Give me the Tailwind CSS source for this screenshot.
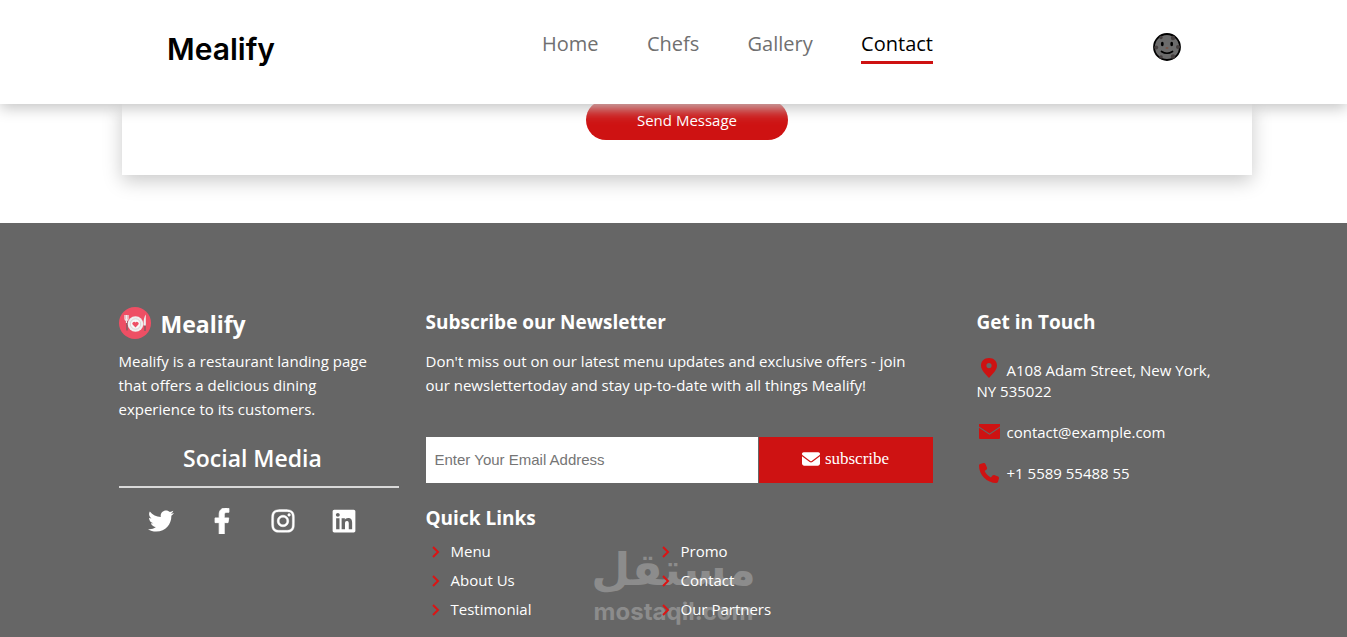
<!DOCTYPE html>
<html lang="en">
<head>
    <meta charset="UTF-8">
    <meta name="viewport" content="width=device-width, initial-scale=1.0">
    <title>Mealify - Contact</title>
    <script src="https://cdn.jsdelivr.net/npm/@tailwindcss/browser@4"></script>
</head>
<body class="bg-white font-['Open_Sans','Noto_Sans',sans-serif] text-[15px]">
    <!-- Icons used more than once -->
    <svg class="hidden" aria-hidden="true">
        <symbol id="chevron" viewBox="0 0 10 16"><path d="M2 3l5 5-5 5" fill="none" stroke="#dc1414" stroke-width="2"/></symbol>
    </svg>

    <!-- Header -->
    <header class="sticky top-0 z-20 bg-white shadow-[0_4px_14px_#c4c4c4]">
        <div class="grid grid-cols-[375fr_391fr_248fr] items-start pl-[167px] pr-[166px] h-[104px] pt-7">
            <a href="#" class="pt-px font-['Inter',sans-serif] font-semibold text-[30px] leading-10 text-black">Mealify</a>
            <nav class="flex justify-between whitespace-nowrap text-xl leading-8 text-[#707070]">
                <a href="#">Home</a>
                <a href="#">Chefs</a>
                <a href="#">Gallery</a>
                <a href="#" class="border-b-3 border-[#ce1212] pb-px text-black">Contact</a>
            </nav>
            <button type="button" aria-label="Dark mode" class="justify-self-end mt-[5px]">
                <svg class="size-7" viewBox="0 0 28 28">
                    <circle cx="14" cy="14" r="13" fill="#6b6b6b" stroke="#000" stroke-width="1.8"/>
                    <g fill="#453f3f">
                        <circle cx="8" cy="4.5" r="1.7"/><circle cx="20" cy="5" r="2.2"/><circle cx="3.2" cy="14.5" r="2"/>
                        <circle cx="25" cy="14" r="2"/><circle cx="8" cy="24" r="1.8"/><circle cx="20" cy="23.5" r="2.2"/>
                    </g>
                    <ellipse cx="9.3" cy="11" rx="1.4" ry="2.2"/><ellipse cx="18.7" cy="11" rx="1.4" ry="2.2"/>
                    <ellipse cx="14" cy="15" rx="1.5" ry="0.9" fill="#7a5547"/>
                    <path d="M8.500 18.500q5.500 3.500 11 0" fill="none" stroke="#000" stroke-width="1.7" stroke-linecap="round"/>
                </svg>
            </button>
        </div>
    </header>

    <!-- End of the contact form -->
    <main class="pl-[122px] pr-[95px] pb-12 -mt-1">
        <form class="flex justify-center bg-white pb-[35px] shadow-[0_6px_18px_rgba(0,0,0,0.21)]">
            <button type="button" class="h-10 w-[202px] rounded-full bg-[#ce1212] text-white">Send Message</button>
        </form>
    </main>

    <!-- Footer -->
    <footer class="relative bg-[#666] text-white pt-[83px] pb-[13px]">
        <div class="relative z-10 mx-auto max-w-[1140px] px-[15px] grid grid-cols-[307fr_551fr_252fr]">
            <div class="pr-[27px]">
                <div class="flex items-start gap-[10px]">
                    <svg class="size-8 mt-px" viewBox="0 0 32 32">
                        <circle cx="16" cy="16" r="16" fill="#ee4f64"/>
                        <path d="M8 14v9.500M26 17v7" stroke="#8d5a62" stroke-width="1.6"/>
                        <circle cx="16.500" cy="17" r="7.8" fill="#efefef"/>
                        <circle cx="16.500" cy="17" r="5.2" fill="#f7f7f7" stroke="#d2cccc" stroke-width="0.8"/>
                        <path d="M16.500 20.500l-2.900-2.900a1.700 1.700 0 0 1 2.900-2 1.700 1.700 0 0 1 2.900 2z" fill="#ee4f64"/>
                        <path d="M6 8v4q0 1.500 1.500 1.500t1.500-1.500V8M7.500 8v8" fill="none" stroke="#efefef" stroke-width="1.2"/>
                        <path d="M26.800 7.500v11H24.500q0-8.500 2.300-11z" fill="#efefef"/>
                    </svg>
                    <h2 class="text-[23px] leading-9 font-bold">Mealify</h2>
                </div>
                <p class="mt-[7px] pr-4 leading-6">Mealify is a restaurant landing page that offers a delicious dining experience to its customers.</p>
                <h3 class="mt-[19px] pb-[10px] pr-3 border-b-2 border-[#d9d9d9] text-center text-[23px] leading-9 font-semibold">Social Media</h3>
                <div class="mt-5 flex justify-center gap-[35px] pr-3">
                    <a href="#" aria-label="Twitter"><svg class="size-[26px]" fill="currentColor" viewBox="0 0 512 512"><path d="M459.370 151.716c.325 4.548.325 9.097.325 13.645 0 138.720-105.583 298.558-298.558 298.558-59.452 0-114.680-17.219-161.137-47.106 8.447.974 16.568 1.299 25.340 1.299 49.055 0 94.213-16.568 130.274-44.832-46.132-.975-84.792-31.188-98.112-72.772 6.498.974 12.995 1.624 19.818 1.624 9.421 0 18.843-1.300 27.614-3.573-48.081-9.747-84.143-51.980-84.143-102.985v-1.299c13.969 7.797 30.214 12.670 47.431 13.319-28.264-18.843-46.781-51.005-46.781-87.391 0-19.492 5.197-37.360 14.294-52.954 51.655 63.675 129.300 105.258 216.365 109.807-1.624-7.797-2.599-15.918-2.599-24.040 0-57.828 46.782-104.934 104.934-104.934 30.213 0 57.502 12.670 76.670 33.137 23.715-4.548 46.456-13.320 66.599-25.340-7.798 24.366-24.366 44.833-46.132 57.827 21.117-2.273 41.584-8.122 60.426-16.243-14.292 20.791-32.161 39.308-52.628 54.253z"/></svg></a>
                    <a href="#" aria-label="Facebook"><svg class="size-[26px]" fill="currentColor" stroke="currentColor" stroke-width="16" viewBox="-96 0 512 512"><path d="M279.140 288l14.220-92.660h-88.910v-60.130c0-25.350 12.420-50.060 52.240-50.060h40.420V6.260S260.430 0 225.360 0c-73.220 0-121.080 44.380-121.080 124.720v70.620H22.890V288h81.390v224h100.170V288z"/></svg></a>
                    <a href="#" aria-label="Instagram"><svg class="size-[26px]" fill="currentColor" stroke="currentColor" stroke-width="8" viewBox="-32 0 512 512"><path d="M224.100 141c-63.600 0-114.900 51.300-114.900 114.900s51.300 114.900 114.900 114.900S339 319.500 339 255.900 287.700 141 224.100 141zm0 189.600c-41.100 0-74.700-33.500-74.700-74.700s33.500-74.700 74.700-74.700 74.700 33.500 74.700 74.700-33.600 74.700-74.700 74.700zm146.400-194.300c0 14.900-12 26.800-26.800 26.800-14.900 0-26.800-12-26.800-26.800s12-26.800 26.800-26.800 26.800 12 26.800 26.800zm76.100 27.200c-1.700-35.900-9.900-67.700-36.200-93.900-26.200-26.200-58-34.400-93.900-36.200-37-2.100-147.900-2.100-184.900 0-35.800 1.700-67.600 9.900-93.900 36.100s-34.400 58-36.200 93.900c-2.100 37-2.100 147.900 0 184.900 1.700 35.900 9.900 67.700 36.200 93.900s58 34.400 93.900 36.200c37 2.100 147.900 2.100 184.900 0 35.900-1.700 67.700-9.900 93.900-36.200 26.200-26.200 34.400-58 36.200-93.900 2.100-37 2.100-147.800 0-184.800zM398.800 388c-7.800 19.600-22.900 34.700-42.600 42.600-29.500 11.700-99.500 9-132.100 9s-102.700 2.600-132.100-9c-19.600-7.800-34.700-22.900-42.600-42.600-11.700-29.500-9-99.500-9-132.100s-2.600-102.700 9-132.100c7.800-19.600 22.900-34.700 42.600-42.600 29.500-11.700 99.500-9 132.100-9s102.700-2.600 132.100 9c19.600 7.800 34.700 22.900 42.600 42.600 11.700 29.500 9 99.500 9 132.100s2.700 102.700-9 132.100z"/></svg></a>
                    <a href="#" aria-label="LinkedIn"><svg class="size-[26px]" fill="currentColor" viewBox="-32 0 512 512"><path d="M416 32H31.900C14.300 32 0 46.500 0 64.300v383.400C0 465.500 14.300 480 31.900 480H416c17.600 0 32-14.500 32-32.300V64.300c0-17.800-14.400-32.300-32-32.300zM135.400 416H69V202.200h66.500V416zm-33.200-243c-21.300 0-38.500-17.300-38.500-38.500S80.900 96 102.200 96c21.200 0 38.500 17.300 38.500 38.500 0 21.300-17.200 38.500-38.500 38.500zm282.100 243h-66.400V312c0-24.800-.5-56.700-34.500-56.700-34.600 0-39.900 27-39.900 54.900V416h-66.400V202.200h63.700v29.200h.9c8.900-16.800 30.600-34.500 62.900-34.500 67.200 0 79.700 44.300 79.700 101.900V416z"/></svg></a>
                </div>
            </div>

            <div class="pr-[44px]">
                <h3 class="text-[19px] leading-8 font-bold">Subscribe our Newsletter</h3>
                <p class="mt-[11px] leading-6">Don't miss out on our latest menu updates and exclusive offers - join our newslettertoday and stay up-to-date with all things Mealify!</p>
                <form class="mt-10 flex gap-px h-[46px]">
                    <input type="email" aria-label="Email address" placeholder="Enter Your Email Address" class="min-w-0 flex-1 bg-white px-[9px] font-['Liberation_Sans',sans-serif] text-[15px] text-black placeholder:text-[#757575]">
                    <button type="button" class="w-[174px] flex items-center justify-center gap-[5px] pb-[2px] bg-[#ce1212] font-['Liberation_Serif',serif] text-[17px]">
                        <svg class="size-[18px]" fill="currentColor" viewBox="0 0 512 512"><path d="M48 64C21.500 64 0 85.500 0 112c0 15.100 7.100 29.300 19.200 38.400L236.800 313.600c11.400 8.500 27 8.500 38.400 0L492.800 150.400c12.100-9.100 19.200-23.300 19.200-38.400c0-26.500-21.500-48-48-48H48zM0 176V384c0 35.300 28.700 64 64 64H448c35.300 0 64-28.700 64-64V176L294.400 339.200c-22.800 17.100-54 17.100-76.800 0L0 176z"/></svg>
                        subscribe
                    </button>
                </form>
                <h3 class="mt-[19px] text-[19px] leading-8 font-bold">Quick Links</h3>
                <ul class="mt-[3px] grid grid-cols-[230px_1fr] leading-[29px] pl-[5px]">
                    <li><a href="#" class="flex items-center gap-[10px]"><svg class="w-[10px] h-4"><use href="#chevron"/></svg>Menu</a></li>
                    <li><a href="#" class="flex items-center gap-[10px]"><svg class="w-[10px] h-4"><use href="#chevron"/></svg>Promo</a></li>
                    <li><a href="#" class="flex items-center gap-[10px]"><svg class="w-[10px] h-4"><use href="#chevron"/></svg>About Us</a></li>
                    <li><a href="#" class="flex items-center gap-[10px]"><svg class="w-[10px] h-4"><use href="#chevron"/></svg>Contact</a></li>
                    <li><a href="#" class="flex items-center gap-[10px]"><svg class="w-[10px] h-4"><use href="#chevron"/></svg>Testimonial</a></li>
                    <li><a href="#" class="flex items-center gap-[10px]"><svg class="w-[10px] h-4"><use href="#chevron"/></svg>Our Partners</a></li>
                </ul>
            </div>

            <div>
                <h3 class="text-[19px] leading-8 font-bold">Get in Touch</h3>
                <div class="mt-5 flex flex-col gap-5 leading-[21px]">
                    <p><svg class="inline-block align-[-2px] w-6 h-5 mr-[6px] fill-[#ce1212]" viewBox="0 0 24 20"><path d="M12 0C7 0 4 3.300 4 7.600 4 12 8.500 16.500 12 20c3.500-3.500 8-8 8-12.400C20 3.300 17 0 12 0zm0 5a2.600 2.600 0 1 1 0 5.200A2.600 2.600 0 0 1 12 5z"/></svg>A108 Adam Street, New York, NY 535022</p>
                    <p class="flex items-center"><svg class="w-6 h-5 mr-[6px] fill-[#ce1212]" viewBox="0 0 24 20"><path d="M2 1h21v2.500l-10.500 7L2 3.500zM2 4.700l10.500 7 10.500-7V15q0 1-1 1H3q-1 0-1-1z"/></svg>contact@example.com</p>
                    <p class="flex items-start"><svg class="w-6 h-5 mr-[6px] fill-[#ce1212]" viewBox="0 0 512 512"><path d="M164.900 24.600c-7.700-18.600-28-28.500-47.400-23.200l-88 24C12.100 30.200 0 46 0 64C0 311.400 200.600 512 448 512c18 0 33.800-12.100 38.600-29.500l24-88c5.300-19.400-4.600-39.700-23.200-47.400l-96-40c-16.300-6.800-35.200-2.100-46.300 11.600L304.700 368C234.300 334.700 177.300 277.700 144 207.300L193.300 167c13.700-11.200 18.400-30 11.600-46.300l-40-96z"/></svg>+1 5589 55488 55</p>
                </div>
            </div>
        </div>

        <!-- Watermark -->
        <div class="absolute left-1/2 bottom-[13px] -translate-x-1/2 w-[162px] flex flex-col items-center text-[#8c8c8c] font-bold pointer-events-none whitespace-nowrap">
            <div lang="ar" dir="rtl" class="font-['DejaVu_Sans',sans-serif] text-[45px] leading-[60px]">مستقل</div>
            <div class="font-['Inter',sans-serif] text-[24px] leading-6">mostaqil.com</div>
        </div>
    </footer>
</body>
</html>
